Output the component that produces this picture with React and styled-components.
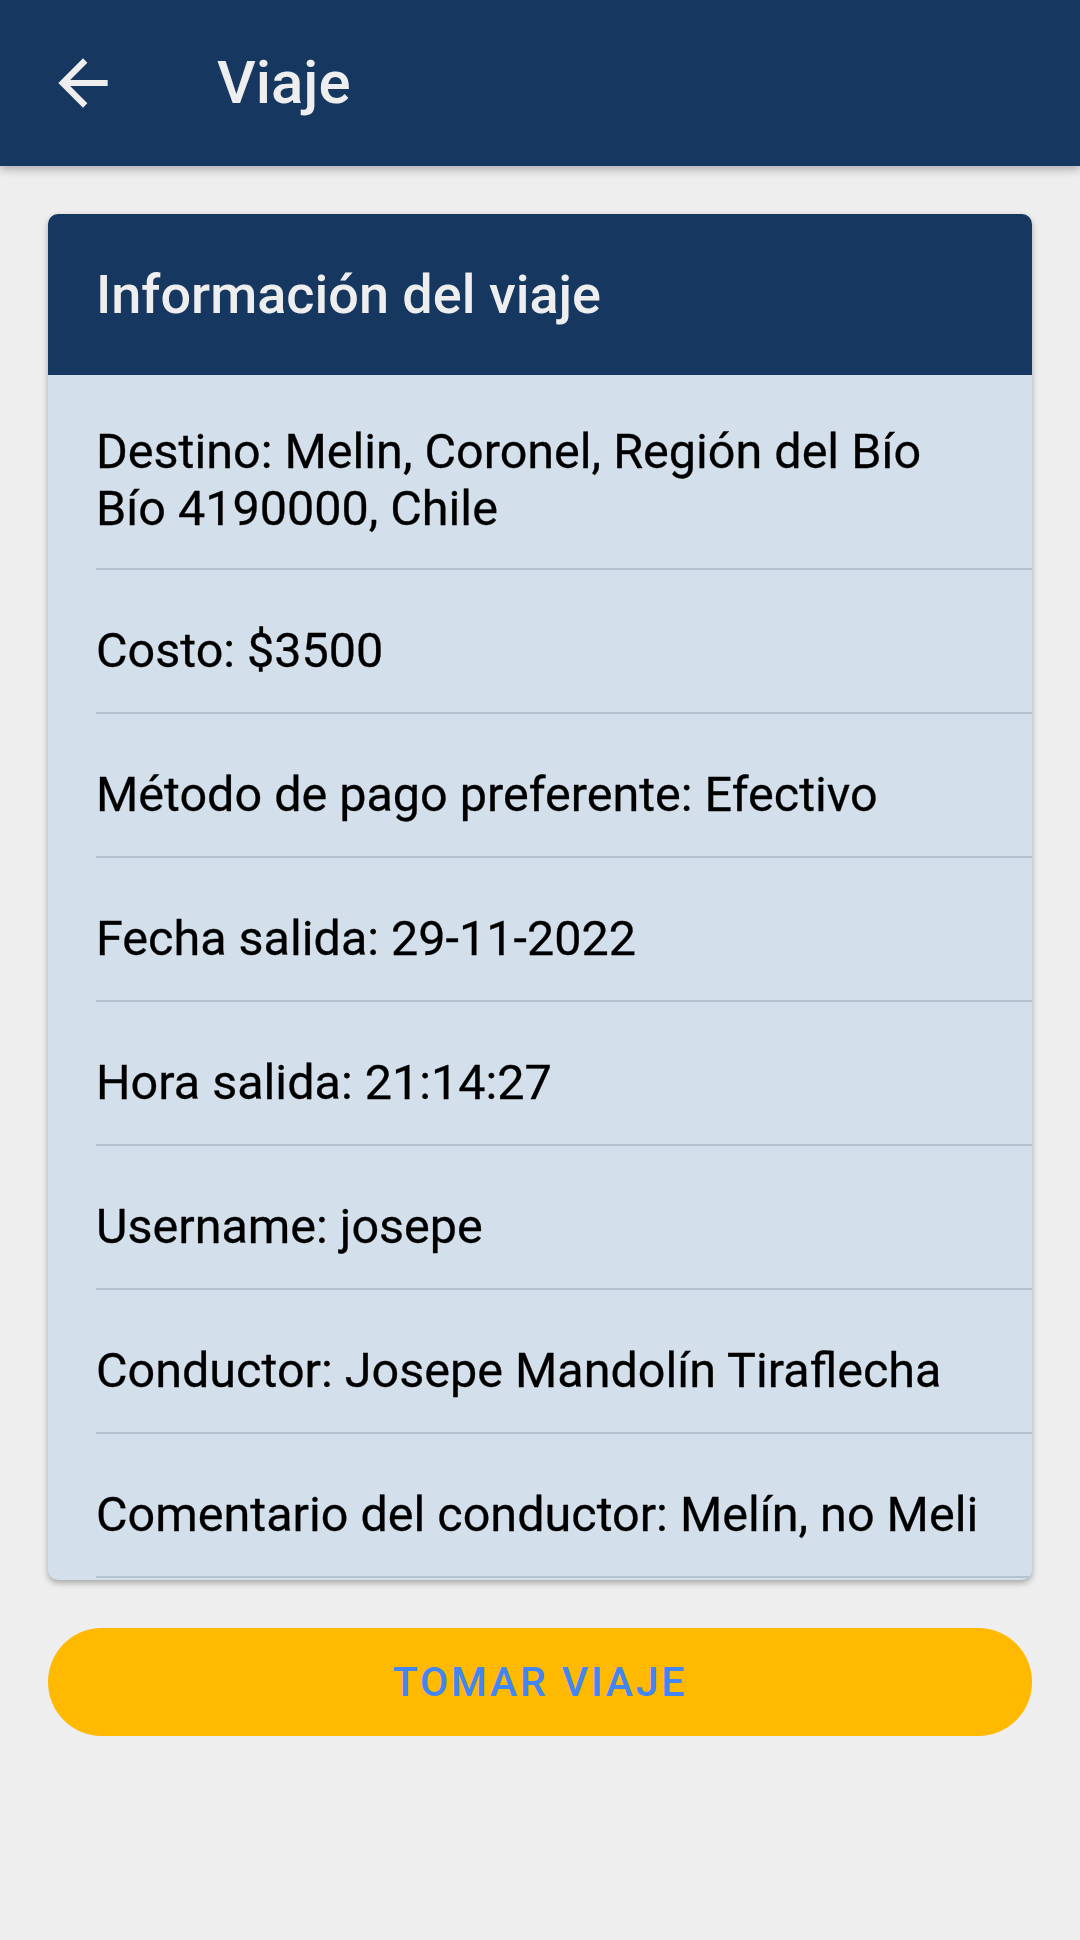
import React from 'react';
import styled, { createGlobalStyle } from 'styled-components';

const GlobalStyle = createGlobalStyle`
  html, body {
    margin: 0;
    padding: 0;
    background: #eeeeee;
    font-family: Roboto, "Noto Sans", sans-serif;
  }
`;

const Page = styled.div`
  width: 1080px;
  min-height: 1940px;
  background: #eeeeee;
  display: flex;
  flex-direction: column;
`;

const TopBar = styled.header`
  height: 166px;
  background: #163760;
  display: flex;
  align-items: center;
  padding-left: 46px;
  gap: 97px;
  box-shadow: 0 4px 8px rgba(0, 0, 0, 0.25);
  position: relative;
  z-index: 2;
  box-sizing: border-box;
`;

const BackButton = styled.button`
  width: 74px;
  height: 74px;
  padding: 0;
  border: none;
  background: none;
  display: flex;
  align-items: center;
  justify-content: center;
  color: #eeeeee;
  cursor: pointer;
`;

const Title = styled.h1`
  margin: 0;
  font-size: 60px;
  font-weight: 500;
  color: #eeeeee;
  line-height: 1;
`;

const Content = styled.main`
  padding: 48px 48px 0;
  display: flex;
  flex-direction: column;
  gap: 48px;
`;

const Card = styled.section`
  background: #d3dfea;
  border-radius: 10px;
  overflow: hidden;
  box-shadow: 0 3px 6px rgba(0, 0, 0, 0.3);
  padding-bottom: 2px;
`;

const CardHeader = styled.h2`
  margin: 0;
  height: 161px;
  background: #163760;
  color: #eeeeee;
  font-size: 54px;
  font-weight: 500;
  display: flex;
  align-items: center;
  padding-left: 48px;
  box-sizing: border-box;
`;

const Row = styled.div`
  margin-left: 48px;
  padding: ${({ first }) => (first ? '48px 48px 31px 0' : '52px 48px 33px 0')};
  font-size: 48.5px;
  line-height: 57px;
  color: #000;
  -webkit-text-stroke: 0.3px #000;
  border-bottom: 2px solid #b4c1ce;
`;

const TakeButton = styled.button`
  height: 108px;
  border: none;
  border-radius: 54px;
  background: #ffb900;
  color: #4285f4;
  font-family: Roboto, sans-serif;
  font-size: 41px;
  font-weight: 500;
  letter-spacing: 2.8px;
  padding: 0;
  cursor: pointer;
`;

const ArrowBack = () => (
  <svg width="74" height="74" viewBox="0 0 24 24" fill="currentColor">
    <path d="M20 11H7.83l5.59-5.59L12 4l-8 8 8 8 1.41-1.41L7.83 13H20v-2z" />
  </svg>
);

const tripInfo = [
  'Destino: Melin, Coronel, Región del Bío Bío 4190000, Chile',
  'Costo: $3500',
  'Método de pago preferente: Efectivo',
  'Fecha salida: 29-11-2022',
  'Hora salida: 21:14:27',
  'Username: josepe',
  'Conductor: Josepe Mandolín Tiraflecha',
  'Comentario del conductor: Melín, no Meli',
];

const App = () => {
  return (
    <Page>
      <GlobalStyle />
      <TopBar>
        <BackButton aria-label="Volver">
          <ArrowBack />
        </BackButton>
        <Title>Viaje</Title>
      </TopBar>
      <Content>
        <Card>
          <CardHeader>Información del viaje</CardHeader>
          {tripInfo.map((text, i) => (
            <Row key={i} first={i === 0}>
              {text}
            </Row>
          ))}
        </Card>
        <TakeButton>TOMAR VIAJE</TakeButton>
      </Content>
    </Page>
  );
};

export default App;
